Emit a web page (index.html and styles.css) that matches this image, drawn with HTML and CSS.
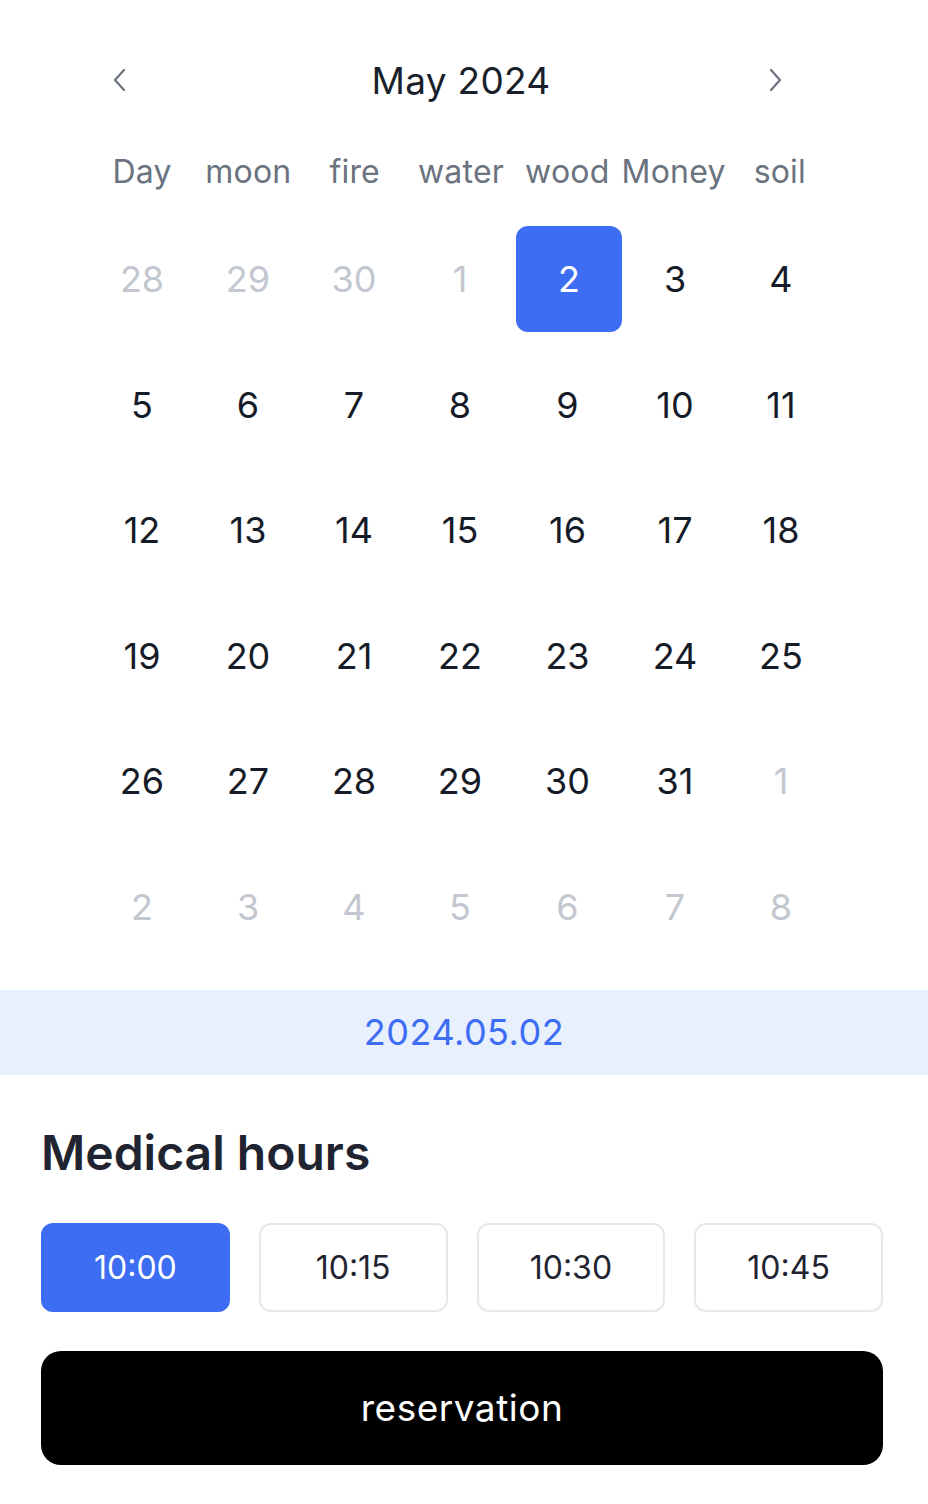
FILE: index.html
```html
<!DOCTYPE html>
<html lang="en">

<head>
  <meta charset="UTF-8">
  <meta name="viewport" content="width=device-width, initial-scale=1.0">
  <title>Reservation</title>

  <link rel="stylesheet" href="styles.css">
</head>

<body>
  <div class="calendar">
    <div class="calendar__head">
      <button class="calendar__nav calendar__nav--prev" aria-label="Previous month">
        <svg width="14" height="24" viewBox="0 0 14 24"><path d="M12 2 L3 12 L12 22" fill="none" stroke="#6b7280" stroke-width="2.2" stroke-linecap="round" stroke-linejoin="round"/></svg>
      </button>
      <div class="calendar__title">May 2024</div>
      <button class="calendar__nav calendar__nav--next" aria-label="Next month">
        <svg width="14" height="24" viewBox="0 0 14 24"><path d="M2 2 L11 12 L2 22" fill="none" stroke="#6b7280" stroke-width="2.2" stroke-linecap="round" stroke-linejoin="round"/></svg>
      </button>
    </div>

    <div class="calendar__weekdays">
      <span>Day</span>
      <span>moon</span>
      <span>fire</span>
      <span>water</span>
      <span>wood</span>
      <span>Money</span>
      <span>soil</span>
    </div>

    <div class="calendar__days">
      <span class="day day--muted">28</span>
      <span class="day day--muted">29</span>
      <span class="day day--muted">30</span>
      <span class="day day--muted">1</span>
      <span class="day day--active">2</span>
      <span class="day">3</span>
      <span class="day">4</span>

      <span class="day">5</span>
      <span class="day">6</span>
      <span class="day">7</span>
      <span class="day">8</span>
      <span class="day">9</span>
      <span class="day">10</span>
      <span class="day">11</span>

      <span class="day">12</span>
      <span class="day">13</span>
      <span class="day">14</span>
      <span class="day">15</span>
      <span class="day">16</span>
      <span class="day">17</span>
      <span class="day">18</span>

      <span class="day">19</span>
      <span class="day">20</span>
      <span class="day">21</span>
      <span class="day">22</span>
      <span class="day">23</span>
      <span class="day">24</span>
      <span class="day">25</span>

      <span class="day">26</span>
      <span class="day">27</span>
      <span class="day">28</span>
      <span class="day">29</span>
      <span class="day">30</span>
      <span class="day">31</span>
      <span class="day day--muted">1</span>

      <span class="day day--muted">2</span>
      <span class="day day--muted">3</span>
      <span class="day day--muted">4</span>
      <span class="day day--muted">5</span>
      <span class="day day--muted">6</span>
      <span class="day day--muted">7</span>
      <span class="day day--muted">8</span>
    </div>
  </div>

  <div class="selected-date">2024.05.02</div>

  <div class="hours">
    <h2 class="hours__title">Medical hours</h2>
    <div class="hours__list">
      <button class="hours__item hours__item--active">10:00</button>
      <button class="hours__item">10:15</button>
      <button class="hours__item">10:30</button>
      <button class="hours__item">10:45</button>
    </div>
    <button class="reserve">reservation</button>
  </div>
</body>

</html>
```

FILE: styles.css
```css
body {
  margin: 0;
  background: #fff;
  font-family: Inter, "Noto Sans", sans-serif;
  color: #1a1f2c;
}

button {
  font-family: inherit;
  cursor: pointer;
}

.calendar {
  width: 744px;
  margin-left: 89px;
  padding-top: 56px;
}

.calendar__head {
  display: grid;
  grid-template-columns: 1fr auto 1fr;
  align-items: center;
  height: 48px;
}

.calendar__nav {
  border: 0;
  background: none;
  padding: 0;
  width: 14px;
  height: 24px;
  display: flex;
}

.calendar__nav--prev {
  justify-self: start;
  margin-left: 23px;
}

.calendar__nav--next {
  justify-self: end;
  margin-right: 50px;
}

.calendar__title {
  font-size: 37px;
  letter-spacing: 0.3px;
  color: #1a1f2c;
}

.calendar__weekdays {
  display: grid;
  grid-template-columns: repeat(7, 1fr);
  margin-top: 46px;
  height: 42px;
  align-items: center;
}

.calendar__weekdays span {
  text-align: center;
  font-size: 32px;
  color: #6b7280;
  letter-spacing: 0.2px;
}

.calendar__days {
  display: grid;
  grid-template-columns: repeat(7, 1fr);
  grid-auto-rows: 125.6px;
  margin-top: 34px;
  margin-bottom: 10px;
}

.day {
  display: flex;
  align-items: center;
  justify-content: center;
  width: 106px;
  height: 106px;
  justify-self: center;
  font-size: 36px;
  color: #161b28;
  border-radius: 12px;
}

.day--muted {
  color: #c3c7cf;
}

.day--active {
  background: #3d6df2;
  color: #fff;
  margin-left: 3px;
}

.selected-date {
  background: #e8effd;
  height: 85px;
  display: flex;
  align-items: center;
  justify-content: center;
  font-size: 36px;
  color: #3d6df2;
  letter-spacing: 0.5px;
}

.hours {
  width: 842px;
  margin-left: 41px;
  padding-top: 48px;
}

.hours__title {
  margin: 0;
  font-size: 48px;
  font-weight: 600;
  color: #1f2430;
  line-height: 60px;
}

.hours__list {
  display: grid;
  grid-template-columns: repeat(4, 1fr);
  gap: 29px;
  margin-top: 40px;
}

.hours__item {
  height: 89px;
  border: 2px solid #e6e8ec;
  border-radius: 12px;
  background: #fff;
  font-size: 32px;
  color: #1f2430;
}

.hours__item--active {
  background: #3d6df2;
  border-color: #3d6df2;
  color: #fff;
}

.reserve {
  display: block;
  width: 100%;
  height: 114px;
  margin-top: 39px;
  border: 0;
  border-radius: 20px;
  background: #000;
  color: #fff;
  font-size: 37px;
  letter-spacing: 0.5px;
}
```
